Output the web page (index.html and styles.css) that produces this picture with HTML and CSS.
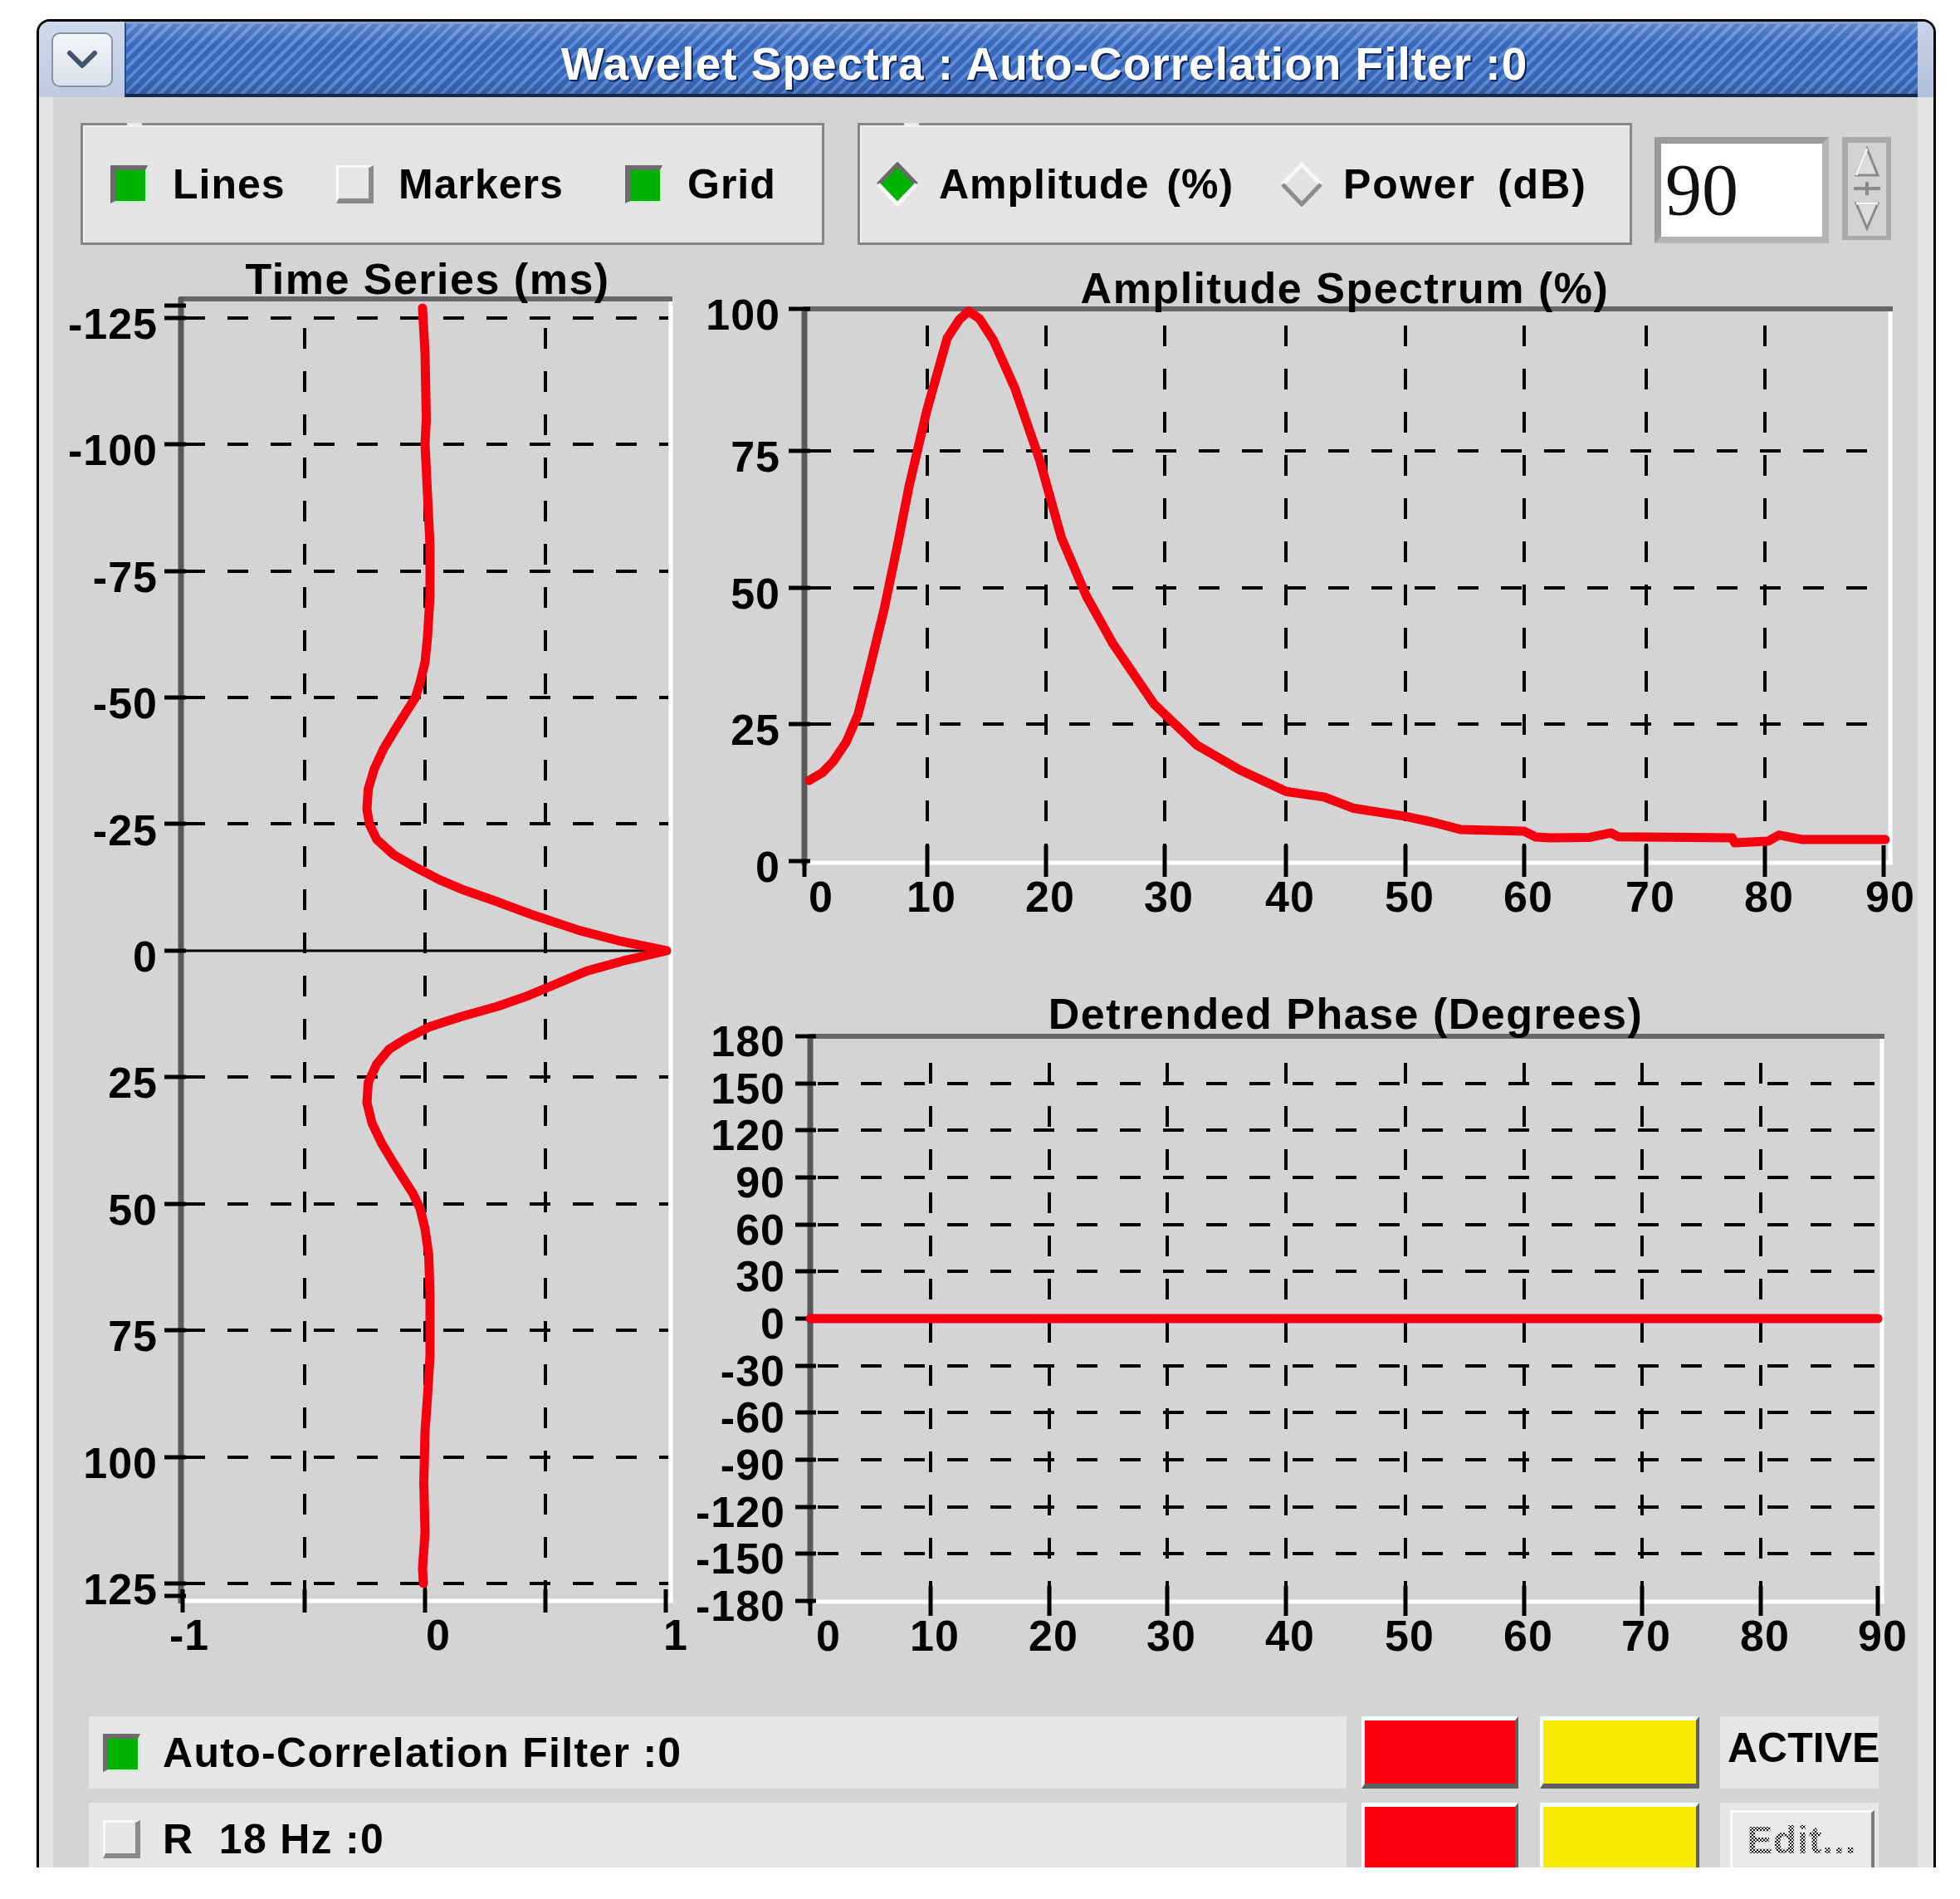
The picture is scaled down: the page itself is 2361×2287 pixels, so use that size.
FILE: index.html
```html
<!DOCTYPE html>
<html>
<head>
<meta charset="utf-8">
<title>Wavelet Spectra</title>
<link rel="stylesheet" href="styles.css">
</head>
<body>
<div class="window">
  <div class="titlebar">
    <div class="menu-area">
      <div class="menu-btn">
        <svg class="chevron" viewBox="0 0 40 26" width="40" height="26"><polyline points="5,5 20,20 35,5"/></svg>
      </div>
    </div>
    <div class="title-main"><span class="title-text">Wavelet Spectra : Auto-Correlation Filter :0</span></div>
    <div class="title-end"></div>
  </div>

  <div class="body">
    <div class="toolbar">
      <div class="group group-display">
        <div class="opt opt-lines"><span class="check on"></span><span class="opt-text">Lines</span></div>
        <div class="opt opt-markers"><span class="check off"></span><span class="opt-text">Markers</span></div>
        <div class="opt opt-grid"><span class="check on"></span><span class="opt-text">Grid</span></div>
      </div>
      <div class="group group-mode">
        <div class="opt opt-amp">
          <svg class="diamond" viewBox="0 0 52 54" width="52" height="54"><polygon class="d-fill-on" points="26,3 49,27 26,51 3,27"/><path class="d-dark" d="M3 27L26 3L49 27"/><path class="d-light" d="M3 27L26 51L49 27"/></svg>
          <span class="opt-text">Amplitude (%)</span>
        </div>
        <div class="opt opt-power">
          <svg class="diamond" viewBox="0 0 52 54" width="52" height="54"><polygon class="d-fill-off" points="26,3 49,27 26,51 3,27"/><path class="d-light" d="M3 27L26 3L49 27"/><path class="d-mid" d="M3 27L26 51L49 27"/></svg>
          <span class="opt-text">Power (dB)</span>
        </div>
      </div>
      <div class="numfield">90</div>
      <div class="spinner">
        <svg viewBox="0 0 59 124" width="59" height="124">
          <rect x="0" y="0" width="59" height="124" fill="#a9a9a9"/>
          <rect x="7" y="7" width="46" height="112" fill="#d2d2d2"/>
          <path d="M17 46L30 14L43 46Z" fill="#dcdcdc" stroke="#8a8a8a" stroke-width="3"/>
          <path d="M17 46L30 14" stroke="#f4f4f4" stroke-width="3"/>
          <path d="M14 62H46M30 54V70" stroke="#8a8a8a" stroke-width="4"/>
          <path d="M17 80H43L30 110Z" fill="#dcdcdc" stroke="#8a8a8a" stroke-width="3"/>
          <path d="M17 80H43" stroke="#f4f4f4" stroke-width="3"/>
        </svg>
      </div>
    </div>

    <div class="charts">
      <svg class="chart chart-time" viewBox="64 300 766 1720" width="766" height="1720">
        <path class="grid" d="M222 383H805M222 535H805M222 688H805M222 840H805M222 992H805M222 1297H805M222 1450H805M222 1602H805M222 1755H805M222 1907H805M367 395V1925M512 395V1925M657 395V1925"/>
        <path class="zero" d="M218 1145H806"/>
        <path class="frame-dark" d="M216 360H810"/>
        <path class="frame-light" d="M808 363V1929M221 1928H811"/>
        <path class="axis-dark" d="M218 358V1931"/>
        <path class="ticks" d="M198 383H224M198 368H224M198 535H224M198 688H224M198 840H224M198 992H224M198 1145H224M198 1297H224M198 1450H224M198 1602H224M198 1755H224M198 1907H224M198 1922H224M220 1914V1942M367 1914V1942M512 1914V1942M657 1914V1942M802 1914V1942"/>
        <polyline class="trace" points="509,371 512,426 513.5,505 512,535 515,596 518,657 518,718 515,767 512,797.5 506,822 500.4,840 488.7,858.5 477,877 462.5,901 451,925.5 443.6,950 442,974.3 445,992.6 453.8,1011 474,1029.2 500.4,1044.4 529.5,1059.7 558.6,1071.8 593.5,1084 643,1102.3 698,1120.6 744.8,1132.8 803,1145 750.6,1157.2 707,1169.4 663.3,1187.7 634.2,1199.9 599.3,1212 555.7,1224.2 517.8,1236.4 488.7,1251.1 468.4,1263.9 453.8,1281.5 443.6,1303.5 442,1327.9 448,1352.3 459.6,1376.6 474.2,1401 485.8,1419.3 497.5,1437.6 506.2,1455.9 512,1480.3 516.4,1510.8 518,1559.5 518,1632.7 515,1681.4 512,1724 510.5,1785 512,1846 509,1888.7 510,1907"/>
        <g class="lbl ylab">
          <text x="190" y="408">-125</text>
          <text x="190" y="560">-100</text>
          <text x="190" y="713">-75</text>
          <text x="190" y="865">-50</text>
          <text x="190" y="1018">-25</text>
          <text x="190" y="1170">0</text>
          <text x="190" y="1322">25</text>
          <text x="190" y="1475">50</text>
          <text x="190" y="1627">75</text>
          <text x="190" y="1780">100</text>
          <text x="190" y="1932">125</text>
        </g>
        <g class="lbl xlab">
          <text x="228" y="1987">-1</text>
          <text x="528" y="1987">0</text>
          <text x="814" y="1987">1</text>
        </g>
        <text class="chart-title" x="515" y="354">Time Series (ms)</text>
      </svg>

      <svg class="chart chart-amp" viewBox="830 300 1480 820" width="1480" height="820">
        <path class="grid" d="M976 543H2272M976 708H2272M976 872H2272M1117 392V1035M1260 392V1035M1403 392V1035M1549 392V1035M1693 392V1035M1836 392V1035M1983 392V1035M2126 392V1035"/>
        <path class="frame-dark" d="M967 372H2280"/>
        <path class="frame-light" d="M2277 375V1040M972 1039H2280"/>
        <path class="axis-dark" d="M969 370V1042"/>
        <path class="ticks" d="M950 372H976M950 543H976M950 708H976M950 872H976M950 1037H976M969 1037V1056M1117 1018V1056M1260 1018V1056M1403 1018V1056M1549 1018V1056M1693 1018V1056M1836 1018V1056M1983 1018V1056M2126 1018V1056M2269 1018V1056"/>
        <polyline class="trace" points="974.7,939.9 990.5,930.6 1003.4,917.3 1019.2,894 1033.5,860.8 1047.8,804.3 1065,733.8 1080.8,658 1095.1,585.5 1116.6,493.7 1141,407.2 1155.3,385.3 1166.8,374.7 1180,384 1196.8,409.9 1222.6,467.8 1252.7,554.9 1278.5,647.3 1308.6,717.8 1340.1,774.3 1390.3,848.1 1441.9,897.4 1493.5,927.3 1549.4,953.2 1595.2,959.9 1629.6,973.2 1692.7,983.1 1725,990 1760,999.1 1836,1001.1 1850,1008 1867.5,1009.1 1914.8,1008.4 1940.6,1003.1 1949.2,1007.7 2086.7,1009.1 2089.6,1015.1 2130,1013 2142.6,1005.7 2171.3,1011.1 2271,1011.1"/>
        <g class="lbl ylab">
          <text x="940" y="397">100</text>
          <text x="940" y="568">75</text>
          <text x="940" y="733">50</text>
          <text x="940" y="897">25</text>
          <text x="940" y="1062">0</text>
        </g>
        <g class="lbl xlab">
          <text x="989" y="1098">0</text>
          <text x="1122" y="1098">10</text>
          <text x="1265" y="1098">20</text>
          <text x="1408" y="1098">30</text>
          <text x="1554" y="1098">40</text>
          <text x="1698" y="1098">50</text>
          <text x="1841" y="1098">60</text>
          <text x="1988" y="1098">70</text>
          <text x="2131" y="1098">80</text>
          <text x="2277" y="1098">90</text>
        </g>
        <text class="chart-title" x="1620" y="365">Amplitude Spectrum (%)</text>
      </svg>

      <svg class="chart chart-phase" viewBox="830 1120 1480 900" width="1480" height="900">
        <path class="grid" d="M985 1305H2262M985 1361H2262M985 1418H2262M985 1475H2262M985 1531H2262M985 1588H2262M985 1645H2262M985 1701H2262M985 1758H2262M985 1815H2262M985 1871H2262M1121 1280V1925M1264 1280V1925M1406 1280V1925M1549 1280V1925M1693 1280V1925M1836 1280V1925M1978 1280V1925M2121 1280V1925"/>
        <path class="frame-dark" d="M974 1248H2270"/>
        <path class="frame-light" d="M2267 1251V1931M979 1929H2270"/>
        <path class="axis-dark" d="M976 1246V1932"/>
        <path class="ticks" d="M958 1248H983M958 1305H983M958 1361H983M958 1418H983M958 1475H983M958 1531H983M958 1588H983M958 1645H983M958 1701H983M958 1758H983M958 1815H983M958 1871H983M958 1928H983M976 1928V1946M1121 1910V1946M1264 1910V1946M1406 1910V1946M1549 1910V1946M1693 1910V1946M1836 1910V1946M1978 1910V1946M2121 1910V1946M2262 1910V1946"/>
        <path class="trace" d="M976 1588H2262"/>
        <g class="lbl ylab">
          <text x="946" y="1272">180</text>
          <text x="946" y="1329">150</text>
          <text x="946" y="1385">120</text>
          <text x="946" y="1442">90</text>
          <text x="946" y="1499">60</text>
          <text x="946" y="1555">30</text>
          <text x="946" y="1612">0</text>
          <text x="946" y="1669">-30</text>
          <text x="946" y="1725">-60</text>
          <text x="946" y="1782">-90</text>
          <text x="946" y="1839">-120</text>
          <text x="946" y="1895">-150</text>
          <text x="946" y="1952">-180</text>
        </g>
        <g class="lbl xlab">
          <text x="998" y="1988">0</text>
          <text x="1126" y="1988">10</text>
          <text x="1269" y="1988">20</text>
          <text x="1411" y="1988">30</text>
          <text x="1554" y="1988">40</text>
          <text x="1698" y="1988">50</text>
          <text x="1841" y="1988">60</text>
          <text x="1983" y="1988">70</text>
          <text x="2126" y="1988">80</text>
          <text x="2268" y="1988">90</text>
        </g>
        <text class="chart-title" x="1621" y="1239">Detrended Phase (Degrees)</text>
      </svg>
    </div>

    <div class="rows">
      <div class="row">
        <div class="row-label"><span class="check on"></span><span class="row-text">Auto-Correlation Filter :0</span></div>
        <div class="swatch swatch-red"></div>
        <div class="swatch swatch-yellow"></div>
        <div class="row-status"><span class="status-text">ACTIVE</span></div>
      </div>
      <div class="row">
        <div class="row-label"><span class="check off"></span><span class="row-text">R  18 Hz :0</span></div>
        <div class="swatch swatch-red"></div>
        <div class="swatch swatch-yellow"></div>
        <div class="row-status"><div class="edit-btn"><span class="edit-text">Edit...</span></div></div>
      </div>
    </div>
  </div>
</div>
</body>
</html>
```

FILE: styles.css
```css
html, body {
  margin: 0;
  padding: 0;
  background: #ffffff;
}

body {
  font-family: "Liberation Sans", Arial, sans-serif;
}

.window {
  box-sizing: border-box;
  margin: 23px 0 0 44px;
  width: 2288px;
  height: 2226px;
  border: 3px solid #000;
  border-bottom: none;
  border-radius: 16px 16px 0 0;
  overflow: hidden;
  background: #d4d4d4;
  display: flex;
  flex-direction: column;
}

/* ---------- title bar ---------- */
.titlebar {
  flex: none;
  height: 91px;
  display: flex;
}

.menu-area {
  width: 103px;
  flex: none;
  background: linear-gradient(#cfd9ea, #bccbe2);
  display: flex;
  align-items: center;
  justify-content: center;
}

.menu-btn {
  box-sizing: border-box;
  width: 74px;
  height: 66px;
  border: 2px solid #8793ab;
  border-radius: 10px;
  background: linear-gradient(#f2f5fa, #dae1ec);
  display: flex;
  align-items: center;
  justify-content: center;
}

.chevron polyline {
  fill: none;
  stroke: #45526b;
  stroke-width: 6;
  stroke-linecap: round;
  stroke-linejoin: round;
}

.title-main {
  flex: 1;
  box-sizing: border-box;
  border-left: 2px solid #2b4b86;
  border-top: 3px solid #7f9ccd;
  border-bottom: 4px solid #13284f;
  background:
    linear-gradient(to bottom, rgba(255,255,255,0.18), rgba(255,255,255,0) 30%, rgba(0,0,0,0) 75%, rgba(0,0,0,0.12)),
    repeating-linear-gradient(135deg, #3767ba 0 6px, #608cd6 6px 10px);
  display: flex;
  align-items: center;
  justify-content: center;
  padding: 12px 0 0 54px;
}

.title-text {
  color: #ffffff;
  font: bold 55px/1 "Liberation Sans", Arial, sans-serif;
  letter-spacing: 1px;
  text-shadow: 2px 2px 0 #0e2452, 1px 1px 1px #0e2452;
  white-space: nowrap;
}

.title-end {
  width: 19px;
  flex: none;
  background: linear-gradient(#c8d4e8, #aebfdb);
}

/* ---------- body ---------- */
.body {
  flex: 1;
  min-height: 0;
  border-left: 17px solid #e3e3e3;
  border-right: 19px solid #e3e3e3;
  display: flex;
  flex-direction: column;
  overflow: hidden;
}

.body > * {
  flex: none;
}

.toolbar {
  margin-top: 31px;
  padding-left: 33px;
  display: flex;
  align-items: flex-start;
}

.group {
  position: relative;
  box-sizing: border-box;
  height: 147px;
  border: 3px solid #868686;
  background: #e4e4e4;
  box-shadow: inset 2px 2px 0 #f3f3f3;
  display: flex;
  align-items: center;
}

.group::before {
  content: "";
  position: absolute;
  top: -3px;
  left: 53px;
  width: 18px;
  height: 3px;
  background: #ececec;
}

.group-display {
  width: 896px;
  padding-left: 33px;
}

.group-mode {
  width: 933px;
  margin-left: 40px;
  padding-left: 19px;
}

.opt {
  display: flex;
  align-items: center;
  flex: none;
  font: bold 50px/1 "Liberation Sans", Arial, sans-serif;
  letter-spacing: 1px;
  color: #000;
  white-space: nowrap;
}

.opt-lines { width: 272px; }
.opt-markers { width: 348px; }
.opt-amp { width: 487px; word-spacing: 6px; }
.opt-power { letter-spacing: 2px; word-spacing: 10px; }

.opt .check {
  margin-right: 30px;
}

.opt .diamond {
  margin-right: 24px;
  flex: none;
}

.check {
  box-sizing: border-box;
  width: 45px;
  height: 46px;
  flex: none;
  border-style: solid;
}

.check.on {
  background: #00b300;
  border-width: 6px 3px 3px 6px;
  border-color: #6c6c6c #cfeecf #cfeecf #6c6c6c;
}

.check.off {
  background: #e6e6e6;
  border-width: 3px 6px 6px 3px;
  border-color: #fafafa #8a8a8a #8a8a8a #fafafa;
}

.diamond path {
  fill: none;
  stroke-width: 5;
}

.d-fill-on { fill: #00b300; }
.d-fill-off { fill: #e2e2e2; }
.d-dark { stroke: #6a6a6a; }
.d-light { stroke: #f7f7f7; }
.d-mid { stroke: #8c8c8c; }

.numfield {
  box-sizing: border-box;
  margin-left: 27px;
  margin-top: 17px;
  width: 210px;
  height: 128px;
  border: 8px solid;
  border-color: #9b9b9b #b4b4b4 #b4b4b4 #9b9b9b;
  background: #ffffff;
  font: 88px/1 "Liberation Serif", "Times New Roman", serif;
  color: #111;
  display: flex;
  align-items: center;
  padding-left: 5px;
}

.spinner {
  margin-left: 16px;
  margin-top: 17px;
  width: 59px;
  height: 124px;
}

.spinner svg {
  display: block;
}

/* ---------- charts ---------- */
.charts {
  margin-top: 5px;
  display: grid;
  grid-template-columns: 766px 1480px;
  grid-template-rows: 820px 900px;
}

.chart {
  display: block;
}

.chart-time {
  grid-column: 1;
  grid-row: 1 / span 2;
}

.chart-amp {
  grid-column: 2;
  grid-row: 1;
}

.chart-phase {
  grid-column: 2;
  grid-row: 2;
}

.grid {
  fill: none;
  stroke: #000;
  stroke-width: 4;
  stroke-dasharray: 25 27;
}

.zero {
  stroke: #000;
  stroke-width: 3;
}

.frame-dark {
  stroke: #676767;
  stroke-width: 6;
}

.frame-light {
  stroke: #ffffff;
  stroke-width: 5;
}

.axis-dark {
  stroke: #5a5a5a;
  stroke-width: 7;
}

.ticks {
  fill: none;
  stroke: #000;
  stroke-width: 5;
}

.trace {
  fill: none;
  stroke: #f5000f;
  stroke-width: 11;
  stroke-linejoin: round;
  stroke-linecap: round;
}

.lbl {
  font-family: "Liberation Sans", Arial, sans-serif;
  font-weight: bold;
  font-size: 52px;
  letter-spacing: 1px;
  fill: #000;
}

.ylab { text-anchor: end; }
.xlab { text-anchor: middle; }

.chart-title {
  font-family: "Liberation Sans", Arial, sans-serif;
  font-weight: bold;
  font-size: 52px;
  letter-spacing: 1.5px;
  text-anchor: middle;
  fill: #000;
}

/* ---------- legend rows ---------- */
.rows {
  margin-top: 47px;
  padding-left: 43px;
}

.row {
  display: flex;
  height: 87px;
}

.row + .row {
  margin-top: 17px;
}

.row-label {
  box-sizing: border-box;
  width: 1515px;
  background: #e6e6e6;
  display: flex;
  align-items: center;
  padding-left: 17px;
}

.row-label .check {
  margin-right: 27px;
}

.row-text {
  font: bold 50px/1 "Liberation Sans", Arial, sans-serif;
  letter-spacing: 1.3px;
  white-space: pre;
  color: #000;
}

.swatch {
  box-sizing: border-box;
  height: 87px;
  border-style: solid;
  border-width: 5px 4px 6px 4px;
  border-color: #f1ffff #5e5e5e #5e5e5e #f6f6f6;
}

.swatch-red {
  margin-left: 18px;
  width: 189px;
  background: #fd0010;
}

.swatch-yellow {
  margin-left: 26px;
  width: 192px;
  background: #f6eb00;
}

.row-status {
  box-sizing: border-box;
  margin-left: 25px;
  width: 191px;
  background: #e6e6e6;
  display: flex;
  align-items: center;
  padding: 0 0 12px 9px;
}

.status-text {
  font: bold 50px/1 "Liberation Sans", Arial, sans-serif;
  color: #000;
}

.edit-btn {
  box-sizing: border-box;
  width: 174px;
  height: 76px;
  margin: 18px 0 0 3px;
  border-style: solid;
  border-width: 3px 4px 6px 3px;
  border-color: #fafafa #7b7b7b #7b7b7b #fafafa;
  background: #e9e9e9;
  display: flex;
  align-items: center;
  justify-content: center;
}

.edit-text {
  font: bold 46px/1 "Liberation Sans", Arial, sans-serif;
  letter-spacing: 1px;
  color: transparent;
  background: repeating-conic-gradient(#1a1a1a 0 25%, transparent 0 50%) 0 0 / 4px 4px;
  -webkit-background-clip: text;
  background-clip: text;
}
```
